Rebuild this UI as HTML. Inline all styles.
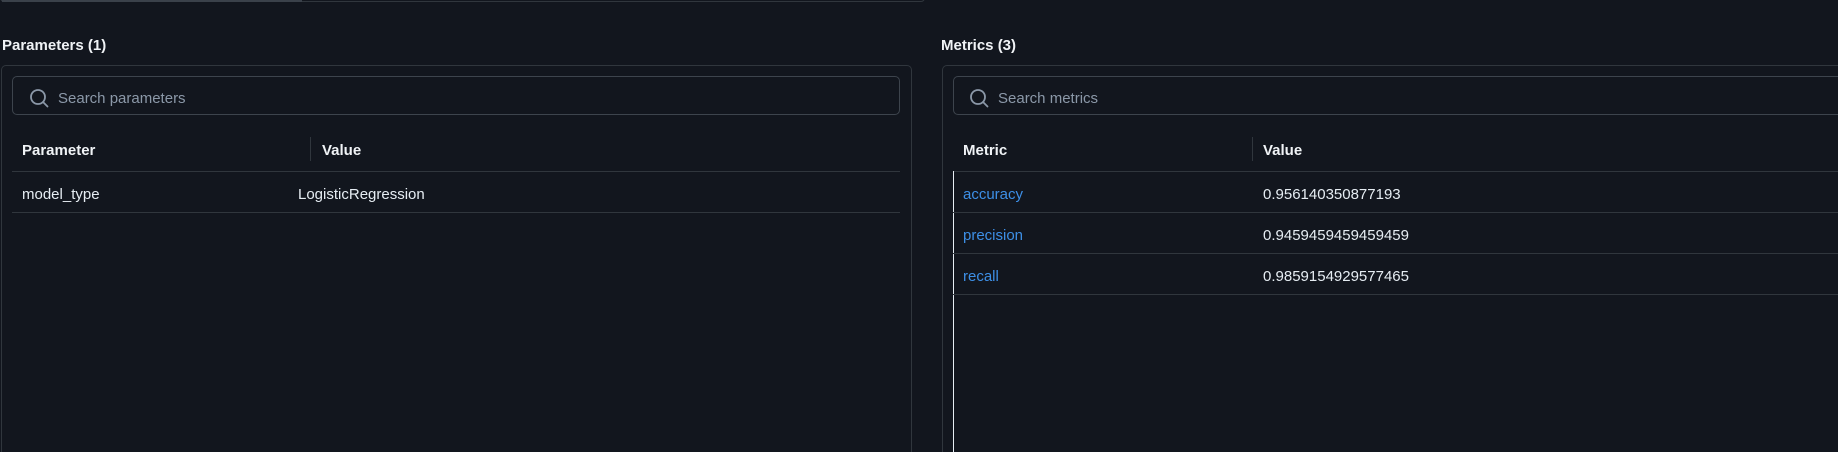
<!DOCTYPE html>
<html style="overflow:hidden;width:1838px;height:452px"><head><meta charset="utf-8"><style>
*{box-sizing:border-box;margin:0;padding:0}
body{width:1838px;height:452px;background:#12161e;overflow:hidden;position:relative;font-family:"Liberation Sans",sans-serif;color:#e6edf3;font-size:15px}
.abs{position:absolute}
.title{font-weight:bold;font-size:15px;color:#f0f3f6}
.panel{border:1px solid #30363d;border-bottom:none;border-radius:5px 5px 0 0;height:387px}
.search{border:1px solid #3d444d;border-radius:5px;height:39px}
.ph{color:#8b98a8;font-size:15px}
.hline{height:1px;background:#30363d}
.hd{font-weight:bold;color:#f0f3f6}
.link{color:#3d8fe6}
</style></head><body>
<div class="abs" style="left:0;top:-6px;width:925px;height:8px;border:1px solid #30363d;border-radius:0 0 4px 4px"></div>
<div class="abs" style="left:2px;top:0;width:300px;height:2px;background:#3a414a"></div>

<div class="abs title" style="left:2px;top:37px">Parameters (1)</div>
<div class="abs panel" style="left:1px;top:65px;width:911px"></div>
<div class="abs search" style="left:12px;top:76px;width:888px"></div>
<svg class="abs" style="left:28px;top:87px" width="22" height="22" viewBox="0 0 22 22"><circle cx="10" cy="10" r="7" fill="none" stroke="#8b98a8" stroke-width="1.8"/><path d="M15 15 L19.5 19.5" stroke="#8b98a8" stroke-width="1.8" stroke-linecap="round"/></svg>
<div class="abs ph" style="left:58px;top:90px">Search parameters</div>
<div class="abs hd" style="left:22px;top:142px">Parameter</div>
<div class="abs" style="left:310px;top:137px;width:1px;height:24px;background:#30363d"></div>
<div class="abs hd" style="left:322px;top:142px">Value</div>
<div class="abs hline" style="left:12px;top:171px;width:888px"></div>
<div class="abs" style="left:22px;top:186px">model_type</div>
<div class="abs" style="left:298px;top:186px">LogisticRegression</div>
<div class="abs hline" style="left:12px;top:212px;width:888px"></div>

<div class="abs title" style="left:941px;top:37px">Metrics (3)</div>
<div class="abs panel" style="left:942px;top:65px;width:950px"></div>
<div class="abs search" style="left:953px;top:76px;width:950px"></div>
<svg class="abs" style="left:968px;top:87px" width="22" height="22" viewBox="0 0 22 22"><circle cx="10" cy="10" r="7" fill="none" stroke="#8b98a8" stroke-width="1.8"/><path d="M15 15 L19.5 19.5" stroke="#8b98a8" stroke-width="1.8" stroke-linecap="round"/></svg>
<div class="abs ph" style="left:998px;top:90px">Search metrics</div>
<div class="abs hd" style="left:963px;top:142px">Metric</div>
<div class="abs" style="left:1252px;top:137px;width:1px;height:24px;background:#30363d"></div>
<div class="abs hd" style="left:1263px;top:142px">Value</div>
<div class="abs hline" style="left:953px;top:171px;width:900px"></div>
<div class="abs" style="left:953px;top:171px;width:1px;height:281px;background:#e6edf3"></div>
<div class="abs link" style="left:963px;top:186px">accuracy</div>
<div class="abs" style="left:1263px;top:186px">0.956140350877193</div>
<div class="abs hline" style="left:953px;top:212px;width:900px"></div>
<div class="abs link" style="left:963px;top:227px">precision</div>
<div class="abs" style="left:1263px;top:227px">0.9459459459459459</div>
<div class="abs hline" style="left:953px;top:253px;width:900px"></div>
<div class="abs link" style="left:963px;top:268px">recall</div>
<div class="abs" style="left:1263px;top:268px">0.9859154929577465</div>
<div class="abs hline" style="left:953px;top:294px;width:900px"></div>
</body></html>
